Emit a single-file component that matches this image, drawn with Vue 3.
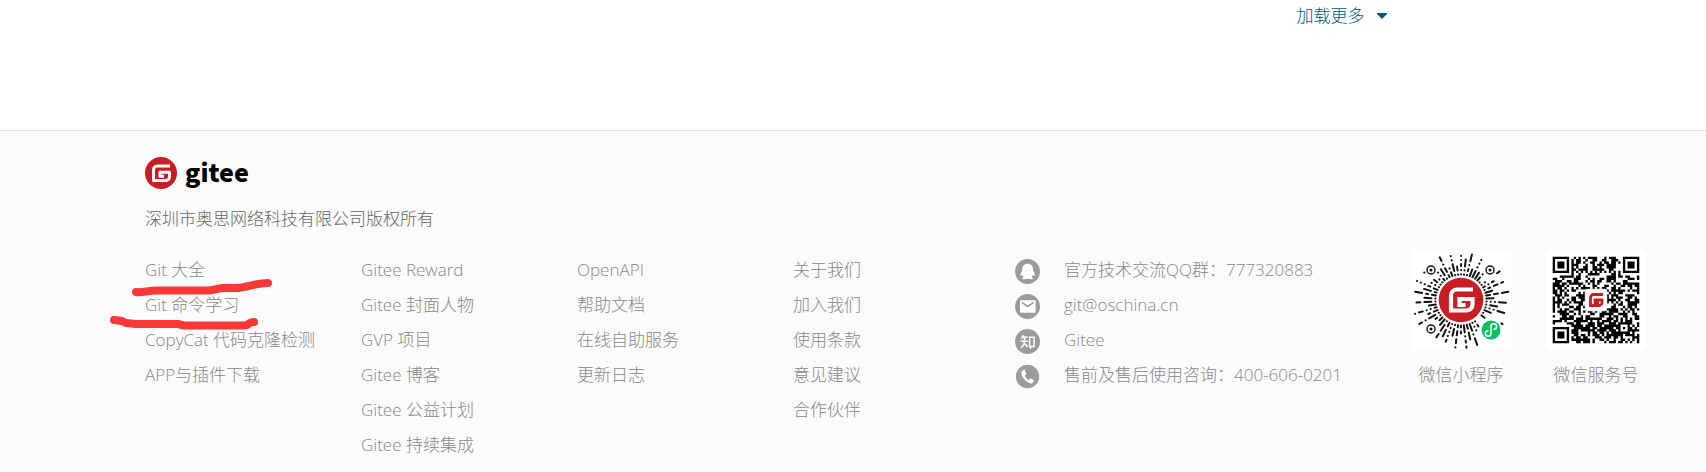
<script setup>
const columns = [
  ['Git 大全', 'Git 命令学习', 'CopyCat 代码克隆检测', 'APP与插件下载'],
  ['Gitee Reward', 'Gitee 封面人物', 'GVP 项目', 'Gitee 博客', 'Gitee 公益计划', 'Gitee 持续集成'],
  ['OpenAPI', '帮助文档', '在线自助服务', '更新日志'],
  ['关于我们', '加入我们', '使用条款', '意见建议', '合作伙伴'],
]

const contacts = [
  { icon: 'qq', text: '官方技术交流QQ群：777320883' },
  { icon: 'mail', text: 'git@oschina.cn', href: 'mailto:git@oschina.cn' },
  { icon: 'zhihu', text: 'Gitee', href: '#' },
  { icon: 'phone', text: '售前及售后使用咨询：400-606-0201' },
]

function createRandom(seed) {
  let s = seed
  return () => {
    s = (s * 1664525 + 1013904223) % 4294967296
    return s / 4294967296
  }
}

// 37 x 37 code: three finder squares, timing lines and one alignment square
function buildCode() {
  const size = 37
  const random = createRandom(77)
  const finder = (x, y) => {
    if (x < -1 || y < -1 || x > 7 || y > 7) return null
    const d = Math.max(Math.abs(x - 3), Math.abs(y - 3))
    return d === 3 || d < 2
  }
  let d = ''
  for (let y = 0; y < size; y++) {
    for (let x = 0; x < size; x++) {
      const noise = random() < 0.58
      let on = finder(x, y) ?? finder(x - 30, y) ?? finder(x, y - 30)
      if (on === null) {
        const a = Math.max(Math.abs(x - 30), Math.abs(y - 30))
        if (a < 3) on = a !== 1
        else if (x === 6 || y === 6) on = (x + y) % 2 === 0
        else on = noise
      }
      if (on) d += `M${x} ${y}h1v1h-1z`
    }
  }
  return d
}

// radial dashes around the round badge
function buildRays() {
  const random = createRandom(31)
  const marks = [[20, 20], [79, 20], [20, 79], [80, 80]]
  let d = ''
  for (let i = 0; i < 54; i++) {
    const angle = (i * Math.PI) / 27 + 0.06
    const cos = Math.cos(angle)
    const sin = Math.sin(angle)
    let r = 25.5
    while (r < 48) {
      const length = Math.min([0.2, 0.2, 2, 4, 7][Math.floor(random() * 5)], 48 - r)
      const clear = marks.every(([mx, my], k) => {
        const limit = k === 3 ? 12 : 7
        return [r, r + length / 2, r + length].every(
          (q) => Math.hypot(50 + q * cos - mx, 50 + q * sin - my) > limit,
        )
      })
      if (clear && (i % 2 === 0 || r < 36)) {
        const e = r + length
        d += `M${(50 + r * cos).toFixed(1)} ${(50 + r * sin).toFixed(1)}L${(50 + e * cos).toFixed(1)} ${(50 + e * sin).toFixed(1)}`
      }
      r += length + 4
    }
  }
  return d
}

const codePath = buildCode()
const rayPath = buildRays()
</script>

<template>
  <div class="page">
    <div class="more">
      <a class="more-link" href="#">加载更多
        <svg class="caret" viewBox="0 0 10 6" aria-hidden="true"><path d="M0 0h10v1L5 6 0 1z" /></svg>
      </a>
    </div>

    <footer class="footer">
      <a class="brand" href="#" aria-label="gitee">
        <svg class="brand-mark" viewBox="0 0 32 32" aria-hidden="true">
          <circle cx="16" cy="16" r="16" fill="#c71d23" />
          <path d="M25 9H12.500a4 4 0 0 0-4 4v10.600h12a4 4 0 0 0 4-4v-4.300h-9.500v4h4" fill="none" stroke="#fff" stroke-width="3" stroke-linejoin="round" />
        </svg>
        <span class="brand-name">gitee</span>
      </a>
      <p class="copyright">深圳市奥思网络科技有限公司版权所有</p>

      <div class="grid">
        <ul v-for="(links, i) in columns" :key="i" class="list">
          <li v-for="link in links" :key="link"><a href="#">{{ link }}</a></li>
        </ul>

        <ul class="list contacts">
          <li v-for="item in contacts" :key="item.icon">
            <svg class="contact-icon" viewBox="0 0 25 25" aria-hidden="true">
              <circle cx="12.5" cy="12.5" :r="item.icon === 'phone' ? 11.7 : 12.5" fill="#9b9b9b" />
              <path v-if="item.icon === 'qq'" fill="#fff" d="M12.6 4.7c-3.400 0-5.400 2.500-5.400 5.400v1.500c-1 1.500-1.900 3.200-1.700 4.700.1.8.6.8 1.100.2l.7-.8c.2 1 .7 1.800 1.400 2.500-1.300.5-1.700 1.100-1.400 1.500.6.8 3.900.7 5.300-.2 1.400.9 4.700 1 5.300.2.3-.4-.1-1-1.400-1.500.7-.7 1.200-1.500 1.400-2.500l.7.8c.5.6 1 .6 1.100-.2.2-1.500-.7-3.200-1.700-4.700v-1.500c0-2.900-2-5.400-5.400-5.400z" />
              <template v-else-if="item.icon === 'mail'">
                <rect x="5" y="6.3" width="15.6" height="12.4" rx="1" fill="#fff" />
                <path d="M6.8 8.4l5.9 4.1 6-4.1" fill="none" stroke="#9b9b9b" stroke-width="1.6" />
              </template>
              <path v-else-if="item.icon === 'zhihu'" fill="none" stroke="#fff" stroke-width="1.5" d="M8.2 6.1c-.4 1.5-1 2.6-1.8 3.5M7.7 8h4.8M5.6 12.2h7.1M9.5 8v4c0 3.3-1.4 5.4-3.6 7M10 14.7l2.6 3.3M14.6 8.3h4.5v9.3h-2.3l-1.3 1.1v-1.1h-.9z" />
              <path v-else fill="#fff" d="M8.8 5.7L6.4 7.4c-1 4.9 5.4 12.1 10.5 12 .9-.6 1.6-1.3 2.2-2.3.2-.4.1-.7-.3-.9l-2.9-1.7c-.4-.2-.7-.1-.9.2l-1 1.3c-2.1-1-3.5-2.6-4.200-4.600l1.200-1.100c.3-.3.3-.5.2-.9L9.700 6c-.2-.4-.5-.6-.9-.3z" />
            </svg>
            <a v-if="item.href" :href="item.href">{{ item.text }}</a>
            <span v-else>{{ item.text }}</span>
          </li>
        </ul>

        <figure class="code">
          <svg class="code-image" viewBox="0 0 100 100" role="img" aria-label="微信小程序">
            <path :d="rayPath" fill="none" stroke="#111" stroke-width="2" stroke-linecap="round" />
            <g fill="none" stroke="#111" stroke-width="1.4">
              <circle cx="20" cy="20" r="4" /><circle cx="79" cy="20" r="4" /><circle cx="20" cy="79" r="4" />
            </g>
            <g fill="#111">
              <circle cx="20" cy="20" r="1.5" /><circle cx="79" cy="20" r="1.5" /><circle cx="20" cy="79" r="1.5" />
            </g>
            <circle cx="50" cy="50" r="22.3" fill="#c71d23" />
            <path d="M62 39.5H46a6 6 0 0 0-6 6v15h15.5a6 6 0 0 0 6-6v-5.500H48.500v6h6" fill="none" stroke="#fff" stroke-width="4.2" />
            <circle cx="80" cy="80" r="9.5" fill="#07c160" />
            <path d="M77 80.7a2.800 2.800 0 1 0 3 2.700v-6.800a2.800 2.800 0 1 1 3 2.700" fill="none" stroke="#fff" stroke-width="1.6" stroke-linecap="round" />
          </svg>
          <figcaption>微信小程序</figcaption>
        </figure>

        <figure class="code">
          <svg class="code-image" viewBox="0 0 100 100" role="img" aria-label="微信服务号">
            <path :d="codePath" transform="translate(6.7 6.7) scale(2.34)" fill="#000" />
            <rect x="39" y="39" width="22" height="22" rx="2.5" fill="#fff" stroke="#ccc" stroke-width=".6" />
            <path d="M57 44.500H47.500a3 3 0 0 0-3 3v8H53a3 3 0 0 0 3-3V50h-7v3h4" fill="none" stroke="#c71d23" stroke-width="2.8" />
          </svg>
          <figcaption>微信服务号</figcaption>
        </figure>

        <svg class="marker" viewBox="0 0 170 60" aria-hidden="true">
          <path d="M26 20C34 21 38 18 50 18.500H96C104 19 106 16 114 16H128C138 15 147 11 158 11" />
          <path d="M4 48L12 49L16 51L26 52H68L74 53.500H135C139 53.500 138 50 144 50" />
        </svg>
      </div>
    </footer>
  </div>
</template>

<style>
body {
  margin: 0;
  background: #fff;
}
</style>

<style scoped>
.page {
  min-height: 100vh;
  display: flex;
  flex-direction: column;
  font-family: "Open Sans", "Noto Sans CJK SC", sans-serif;
  font-size: 17px;
  font-weight: 300;
  line-height: 35px;
  color: #888;
}
a {
  color: inherit;
  text-decoration: none;
}
.more {
  height: 130px;
  padding-left: 76%;
  line-height: 32px;
}
.more-link {
  display: inline-flex;
  align-items: center;
  gap: 12px;
  color: #005980;
}
.caret {
  width: 10px;
  height: 6px;
  fill: currentColor;
}
.footer {
  flex: 1;
  border-top: 1px solid #dce3e8;
  background: #fbfbfb;
  padding: 24px 60px 9px 145px;
}
.brand {
  display: flex;
  align-items: center;
  gap: 8px;
  height: 36px;
  width: max-content;
}
.brand-mark {
  width: 32px;
  height: 32px;
}
.brand-name {
  font-family: "Noto Sans CJK SC", sans-serif;
  font-size: 25px;
  font-weight: 900;
  line-height: 32px;
  padding-bottom: 5px;
  color: #000;
}
.copyright {
  margin: 10px 0 16px;
  color: #666;
}
.grid {
  position: relative;
  display: grid;
  grid-template-columns: 216fr 216fr 216fr 222fr 396fr 135fr 100px;
}
.list {
  list-style: none;
  margin: 0;
  padding: 0;
  white-space: nowrap;
}
.contacts li {
  display: flex;
  align-items: center;
  gap: 24px;
}
.contact-icon {
  width: 25px;
  height: 25px;
  margin-top: 4px;
}
.code {
  margin: -2px 0 0;
  width: 100px;
  text-align: center;
}
.code-image {
  display: block;
  width: 100px;
  height: 100px;
  margin-bottom: 7px;
  background: #fff;
}
.marker {
  position: absolute;
  left: -35px;
  top: 20px;
  width: 170px;
  height: 60px;
  fill: none;
  stroke: #fb3837;
  stroke-width: 8px;
  stroke-linecap: round;
  stroke-linejoin: round;
  pointer-events: none;
}
</style>
